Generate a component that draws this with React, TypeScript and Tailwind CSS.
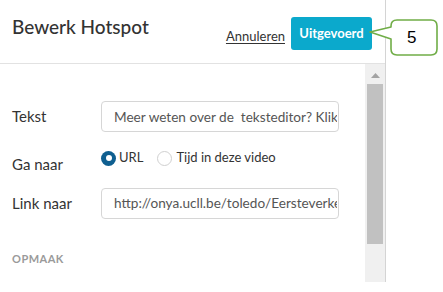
import { useState } from "react";

// Hotspot edit panel with a numbered callout pointing to the save button

function Field({ label, value }: { label: string; value: string }) {
  return (
    <div className="flex items-center">
      <label className="w-[101px] pl-3 text-[15px] text-[#333]">{label}</label>
      <input
        readOnly
        value={value}
        className="w-[238px] h-[31px] rounded-[4px] border border-[#d6d6d6] bg-white pl-3 pr-px text-[13.6px] text-[#555] outline-none"
      />
    </div>
  );
}

function Radio({ checked, onClick }: { checked: boolean; onClick: () => void }) {
  return (
    <button
      onClick={onClick}
      className={`w-[15px] h-[15px] rounded-full flex items-center justify-center ${
        checked ? "bg-[#0f5f90]" : "border border-[#d0d0d0] bg-white"
      }`}
    >
      {checked && <span className="w-[6px] h-[6px] rounded-full bg-white" />}
    </button>
  );
}

export default function App() {
  const [target, setTarget] = useState<"url" | "time">("url");

  return (
    <div className="relative w-[443px] h-[292px] bg-white font-['Lato',sans-serif] overflow-hidden">
      <div className="w-[386px] h-[282px] border-r border-[#d4d4d4] flex flex-col">
        {/* Header */}
        <header className="h-[64px] border-b border-[#e2e2e2] flex items-start justify-between pl-3 pr-[13px] shrink-0">
          <h1 className="mt-[15px] text-[19px] leading-[24px] font-medium text-[#333]">Bewerk Hotspot</h1>
          <div className="mt-[17px] flex items-center gap-[6px]">
            <a className="text-[13px] text-[#333] underline underline-offset-2 mt-[6px]">Annuleren</a>
            <button className="h-[33px] w-[81px] rounded-[3px] bg-[#0ba9cc] text-white text-[13px] font-bold">
              Uitgevoerd
            </button>
          </div>
        </header>

        {/* Body */}
        <div className="flex flex-1 min-h-0">
          <main className="flex-1 pt-[37px]">
            <Field label="Tekst" value="Meer weten over de  teksteditor? Klik hier" />

            <div className="flex items-start mt-[16px]">
              <span className="w-[101px] pl-3 pt-[5px] text-[15px] text-[#333]">Ga naar</span>
              <div className="flex items-center h-[20px] text-[13px] text-[#333]">
                <Radio checked={target === "url"} onClick={() => setTarget("url")} />
                <span className="ml-[3px]">URL</span>
                <span className="ml-[14px]">
                  <Radio checked={target === "time"} onClick={() => setTarget("time")} />
                </span>
                <span className="ml-[4px]">Tijd in deze video</span>
              </div>
            </div>

            <div className="mt-[12px]">
              <Field label="Link naar" value="http://onya.ucll.be/toledo/Eersteverkenning" />
            </div>

            <p className="mt-[32px] pl-3 text-[11px] font-bold tracking-[0.5px] text-[#9a9a9a]">OPMAAK</p>
          </main>

          {/* Scrollbar */}
          <div className="w-[20px] bg-[#f0f0f0] flex flex-col items-center">
            <svg width="9" height="5" viewBox="0 0 9 5" className="mt-[9px]">
              <polygon points="4.5,0 9,5 0,5" fill="#a3a3a3" />
            </svg>
            <div className="mt-[6px] w-[16px] h-[160px] bg-[#c1c1c1]" />
          </div>
        </div>
      </div>

      {/* Callout */}
      <svg width="72" height="40" viewBox="0 0 72 40" className="absolute left-[368px] top-[18px]">
        <path
          d="M 29 2 H 63 Q 69 2 69 8 V 31 Q 69 37 63 37 H 29 Q 23 37 23 31 V 21 L 2 14 L 23 9 V 8 Q 23 2 29 2 Z"
          fill="white"
          stroke="#70ad47"
          strokeWidth="1.6"
          strokeLinejoin="round"
        />
      </svg>
      <span className="absolute left-[407px] top-[28px] text-[17px] leading-[20px] font-['Liberation_Sans',sans-serif] text-black">
        5
      </span>
    </div>
  );
}
